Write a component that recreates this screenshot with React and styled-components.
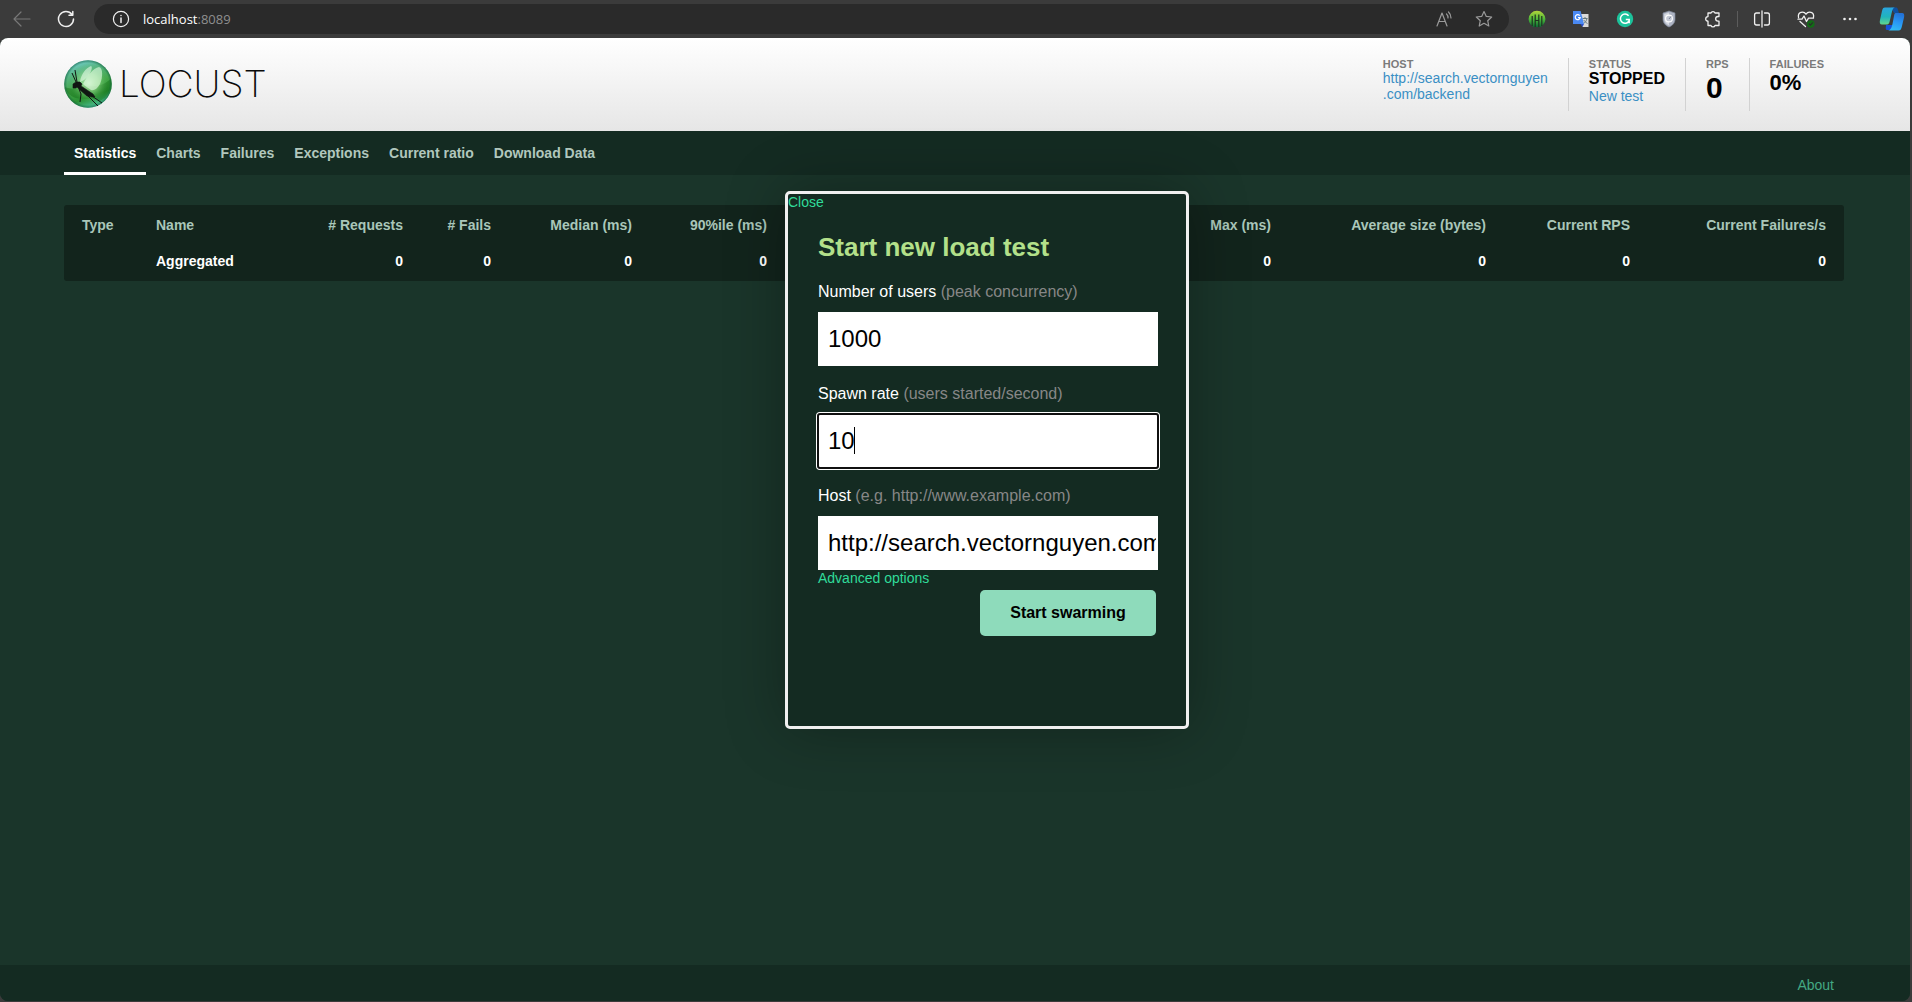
import React, { useState } from "react";
import styled, { createGlobalStyle } from "styled-components";

const GlobalStyle = createGlobalStyle`
  * {
    box-sizing: border-box;
  }

  body {
    margin: 0;
    background-color: #3b3b3b;
    color: #ffffff;
    font-family: Arial, "Liberation Sans", sans-serif;
    font-size: 14px;
    line-height: 16px;
  }

  a {
    text-decoration: none;
  }

  svg {
    display: block;
    flex: none;
  }
`;

const Window = styled.div`
  display: flex;
  flex-direction: column;
  min-height: 100vh;
  padding: 0 2px 1px 0;
`;

/* Browser toolbar */

const Toolbar = styled.div`
  display: flex;
  align-items: center;
  height: 38px;
  margin-right: -2px;
`;

const ToolButton = styled.button`
  display: flex;
  align-items: center;
  justify-content: center;
  flex: none;
  width: ${(props) => props.$width || 44}px;
  height: 30px;
  padding: 0;
  border: none;
  background: none;
  color: ${(props) => props.$color || "#f0f0f0"};
`;

const AddressBar = styled.div`
  display: flex;
  align-items: center;
  flex: 1;
  height: 30px;
  margin: 0 6px;
  padding: 0 5px 0 4px;
  border-radius: 15px;
  background-color: #2a2a2a;
`;

const Address = styled.div`
  flex: 1;
  color: #8f8f8f;
  font-family: "Open Sans", "Noto Sans", sans-serif;
  font-size: 13px;
  line-height: 18px;

  span {
    color: #ffffff;
  }
`;

const ToolDivider = styled.div`
  width: 1px;
  height: 16px;
  margin: 0 2px;
  background-color: #5c5c5c;
`;

/* Page */

const Page = styled.div`
  position: relative;
  display: flex;
  flex-direction: column;
  flex: 1;
  overflow: hidden;
  border-radius: 8px;
  background-color: #1a352a;
`;

const Header = styled.header`
  display: flex;
  justify-content: space-between;
  align-items: flex-start;
  height: 93px;
  padding: 20px 66px 0 64px;
  background: linear-gradient(#ffffff, #e6e6e6);
`;

const Logo = styled.a`
  display: flex;
  align-items: center;
  gap: 7px;
  padding-top: 2px;
  color: #0a0a0a;
  font-family: Inter, Lato, sans-serif;
  font-size: 37px;
  font-weight: 200;
  line-height: 48px;
`;

const Stats = styled.div`
  display: flex;
`;

const StatBox = styled.div`
  height: 53px;
  padding: 0 20px;
  color: #000000;

  & + & {
    border-left: 1px solid #d2d2d2;
  }

  a {
    display: block;
    color: #3a8fc4;
  }
`;

const StatLabel = styled.div`
  color: #7b7b7b;
  font-size: 11px;
  font-weight: bold;
  line-height: 12px;
`;

const StatValue = styled.div`
  font-size: ${(props) => props.$size}px;
  font-weight: bold;
  line-height: ${(props) => props.$line}px;
`;

const Nav = styled.nav`
  display: flex;
  height: 44px;
  padding: 0 64px;
  background-color: #142b22;
`;

const Tab = styled.a`
  padding: 14px 10px 11px;
  border-bottom: 3px solid ${(props) => (props.$active ? "#ffffff" : "transparent")};
  color: ${(props) => (props.$active ? "#ffffff" : "#b1c7bd")};
  font-weight: bold;
`;

const Main = styled.main`
  flex: 1;
  padding: 30px 66px 0 64px;
`;

const TablePanel = styled.div`
  padding: 2px 0;
  border-radius: 3px;
  background-color: #12241c;
`;

const StatsTable = styled.table`
  width: 100%;
  table-layout: fixed;
  border-collapse: collapse;
  font-weight: bold;
`;

const Column = styled.col`
  width: ${(props) => props.$width}px;
`;

const Cell = styled.td`
  height: 36px;
  padding: 0 18px;
  text-align: ${(props) => (props.$left ? "left" : "right")};
  white-space: nowrap;
`;

const HeadCell = styled(Cell)`
  color: #a9c6b9;
`;

const Footer = styled.footer`
  height: 36px;
  padding: 12px 76px 0;
  background-color: #142b22;
  text-align: right;

  a {
    color: #43a883;
  }
`;

/* Start dialog, shown over the page */

const Dialog = styled.section`
  position: absolute;
  top: 153px;
  left: 50%;
  width: 404px;
  min-height: 538px;
  margin-left: -170px;
  border: 3px solid #f0f0f0;
  border-radius: 5px;
  background-color: #142b22;
  box-shadow: 0 0 60px rgba(0, 0, 0, 0.3);
`;

const DialogLink = styled.a`
  display: block;
  color: #30dc9a;
`;

const Form = styled.form`
  display: flex;
  flex-direction: column;
  padding: 22px 28px 0 30px;
`;

const Title = styled.h2`
  margin: 0 0 20px;
  color: #b3e08a;
  font-size: 26px;
  line-height: 30px;
`;

const Label = styled.label`
  margin-bottom: 10px;
  font-size: 16px;
  line-height: 20px;

  span {
    color: #878787;
  }
`;

const Field = styled.div`
  position: relative;
  margin-bottom: ${(props) => (props.$last ? 0 : 18)}px;
`;

const Input = styled.input`
  display: block;
  width: 100%;
  height: 54px;
  padding: 0 2px 0 10px;
  border: none;
  background-color: #ffffff;
  color: #000000;
  caret-color: transparent;
  font-family: inherit;
  font-size: 24px;

  &:focus {
    border-radius: 2px;
    outline: 2px solid #101010;
    outline-offset: -1px;
    box-shadow: 0 0 0 2px #ffffff;
  }
`;

const Caret = styled.i`
  position: absolute;
  top: 13px;
  left: 36px;
  width: 1px;
  height: 27px;
  background-color: #000000;
`;

const SubmitButton = styled.button`
  align-self: flex-end;
  width: 176px;
  height: 46px;
  margin: 4px 2px 0 0;
  border: none;
  border-radius: 5px;
  background-color: #8edbbb;
  color: #000000;
  font-family: inherit;
  font-size: 16px;
  font-weight: bold;
`;

const columns = [
  { title: "Type", width: 74, value: "", left: true },
  { title: "Name", width: 172, value: "Aggregated", left: true },
  { title: "# Requests", width: 111, value: 0 },
  { title: "# Fails", width: 88, value: 0 },
  { title: "Median (ms)", width: 141, value: 0 },
  { title: "90%ile (ms)", width: 135, value: 0 },
  { title: "", width: 390, value: "" },
  { title: "Max (ms)", width: 114, value: 0 },
  { title: "Average size (bytes)", width: 215, value: 0 },
  { title: "Current RPS", width: 144, value: 0 },
  { title: "Current Failures/s", width: 196, value: 0 },
];

const tabs = [
  "Statistics",
  "Charts",
  "Failures",
  "Exceptions",
  "Current ratio",
  "Download Data",
];

function LineIcon({ children }) {
  return (
    <svg
      width="18"
      height="18"
      viewBox="0 0 18 18"
      fill="none"
      stroke="currentColor"
      strokeWidth="1.2"
      strokeLinecap="round"
      strokeLinejoin="round"
    >
      {children}
    </svg>
  );
}

function LocustMark() {
  return (
    <svg width="48" height="48" viewBox="0 0 48 48">
      <defs>
        <linearGradient id="orb" x1="0.25" y1="0" x2="0.6" y2="1">
          <stop offset="0" stopColor="#74cfd0" />
          <stop offset="0.25" stopColor="#57b585" />
          <stop offset="0.55" stopColor="#43a648" />
          <stop offset="0.78" stopColor="#2b9134" />
          <stop offset="1" stopColor="#4cc09a" />
        </linearGradient>
        <radialGradient id="glow" cx="0.52" cy="0.48" r="0.42">
          <stop offset="0" stopColor="#e6ffe2" stopOpacity="0.7" />
          <stop offset="0.5" stopColor="#a8e89c" stopOpacity="0.5" />
          <stop offset="1" stopColor="#4cb050" stopOpacity="0" />
        </radialGradient>
        <radialGradient id="rim" cx="0.5" cy="0.5" r="0.5">
          <stop offset="0.88" stopColor="#0b5a3c" stopOpacity="0" />
          <stop offset="1" stopColor="#0b5a3c" stopOpacity="0.6" />
        </radialGradient>
      </defs>
      <circle cx="24" cy="24" r="23.8" fill="url(#orb)" />
      <path
        d="M1 27C9 31 14 25 25 26S40 24 47 19C48 29 43 38 36 41C28 37 20 40 12 38C6 36 2 32 1 27Z"
        fill="#0f6a12"
        opacity="0.4"
      />
      <circle cx="24" cy="24" r="23" fill="url(#glow)" />
      <circle cx="24" cy="24" r="23.8" fill="url(#rim)" />
      <path
        d="M16 22C17 14 22 8 27 6C29 7 27 13 24 16C22 19 19 21 16 22Z"
        fill="#effff0"
        opacity="0.55"
      />
      <path
        d="M19 24C23 16 29 8 35 7C39 8 39 17 36 24C33 29 30 31 27 30C24 28 21 26 19 24Z"
        fill="#e8ffe6"
        opacity="0.6"
      />
      <path
        d="M9 28L9 24L12 22L16 22L18 24L17 26L23 30L29 34L31 37L28 37L23 36L16 30L13 27L12 28Z"
        fill="#101612"
        stroke="#101612"
        strokeWidth="0.6"
        strokeLinejoin="round"
      />
      <path
        d="M12 22L8 13M13 22L11 10M15 29L17 34L16 42M23 35L34 46M28 36L38 43"
        fill="none"
        stroke="#101612"
        strokeWidth="1"
      />
    </svg>
  );
}

function EqualizerIcon() {
  return (
    <svg width="18" height="18" viewBox="0 0 18 18">
      <defs>
        <linearGradient id="lime" x1="0" y1="0" x2="0" y2="1">
          <stop offset="0" stopColor="#b5d63a" />
          <stop offset="0.5" stopColor="#4fb83a" />
          <stop offset="1" stopColor="#0c6b35" />
        </linearGradient>
      </defs>
      <path d="M3 15A8.4 8.4 0 1 1 15 15L12.5 17H5.5Z" fill="url(#lime)" />
      <path d="M4.2 6V16M7.2 4.5V17M10.8 4.5V17M13.8 6V16M7 10.5H11" stroke="#1f3320" strokeWidth="1.2" />
    </svg>
  );
}

function TranslateIcon() {
  return (
    <svg width="18" height="18" viewBox="0 0 18 18">
      <path d="M8 4H16.5V17H10.5Z" fill="#d9d9d9" />
      <path d="M10.5 8.5H15.5M13 7V8.5M15 8.5C14.4 11 13 12.8 11.4 13.6M11.6 10L15.4 13.8" fill="none" stroke="#66797d" strokeWidth="1" />
      <path d="M1 1H8.6L12 14H1Z" fill="#4a89f3" />
      <path d="M8.5 14H12L10.4 17Z" fill="#2b50c8" />
      <path d="M7.7 5.6A2.5 2.5 0 1 0 8.2 7.7H6" fill="none" stroke="#ffffff" strokeWidth="1.2" />
    </svg>
  );
}

function GrammarIcon() {
  return (
    <svg width="18" height="18" viewBox="0 0 18 18">
      <circle cx="9" cy="9" r="8.2" fill="#1cc29b" />
      <path d="M12.6 5.8A4.6 4.6 0 1 0 13 11M13.2 13.2V9.6H9.8" fill="none" stroke="#ffffff" strokeWidth="1.5" />
    </svg>
  );
}

function ShieldIcon() {
  return (
    <svg width="18" height="18" viewBox="0 0 18 18">
      <path d="M9 1L15 3V9C15 13 12.4 15.6 9 17C5.6 15.6 3 13 3 9V3Z" fill="#aeb4c3" stroke="#7d8596" strokeWidth="0.7" />
      <path d="M9 2.5L4.3 4V9C4.3 11.8 6.2 14 9 15.3Z" fill="#d5d9e2" />
      <circle cx="9" cy="8.5" r="3.4" fill="#c4c9d5" stroke="#ffffff" strokeWidth="1.1" />
      <path d="M9 9L11 6.5" stroke="#778094" strokeWidth="1" />
    </svg>
  );
}

function CopilotIcon() {
  return (
    <svg width="26" height="26" viewBox="0 0 26 26">
      <defs>
        <linearGradient id="copilotLeft" x1="0" y1="0" x2="0" y2="1">
          <stop offset="0" stopColor="#2aa5e0" />
          <stop offset="0.55" stopColor="#20b4bd" />
          <stop offset="1" stopColor="#62d58d" />
        </linearGradient>
        <linearGradient id="copilotRight" x1="0.6" y1="0" x2="0.3" y2="1">
          <stop offset="0" stopColor="#2372d6" />
          <stop offset="0.5" stopColor="#2997f5" />
          <stop offset="1" stopColor="#31bdf4" />
        </linearGradient>
      </defs>
      <path d="M12 1.5H17C19 1.5 19 4 20 7H15Z" fill="#0f4f9e" />
      <path d="M8 24H12L14 19H7C7 21 6 24 8 24Z" fill="#1650d8" />
      <path d="M6 1.5H16C13.5 2 13.2 5 12.2 9L10.5 16C10 18 9 18.5 7 18.5H3C0.8 18.5 0.4 16.5 1 14L3 5C3.6 2.5 4.2 1.5 6 1.5Z" fill="url(#copilotLeft)" />
      <path d="M16.5 7H23C25.2 7 25.6 9 25 11.5L23 20C22.3 23 21.6 24.5 19.5 24.5H9C12 24 12.6 21.5 13.6 17.5L15 10C15.3 8 15.7 7 16.5 7Z" fill="url(#copilotRight)" />
    </svg>
  );
}

function BrowserToolbar() {
  return (
    <Toolbar>
      <ToolButton aria-label="Back" $color="#787878">
        <LineIcon>
          <path d="M17 9H1M8 2L1 9L8 16" />
        </LineIcon>
      </ToolButton>
      <ToolButton aria-label="Refresh">
        <LineIcon>
          <path d="M15 4.5A7.5 7.5 0 1 0 16.5 9M15.8 1.5V5.2H12" strokeWidth="1.5" />
        </LineIcon>
      </ToolButton>
      <AddressBar>
        <ToolButton aria-label="Site information" $width={45}>
          <LineIcon>
            <circle cx="9" cy="9" r="7.6" />
            <path d="M9 8V12.5M9 5.4V5.6" strokeWidth="1.5" />
          </LineIcon>
        </ToolButton>
        <Address>
          <span>localhost</span>:8089
        </Address>
        <ToolButton aria-label="Read aloud" $width={40} $color="#9a9a9a">
          <LineIcon>
            <path d="M2 16L7 3L12 16M4 11.5H10M11.5 4A5 5 0 0 1 13 8M13.5 2A8 8 0 0 1 16 8" />
          </LineIcon>
        </ToolButton>
        <ToolButton aria-label="Add to favorites" $width={40} $color="#9a9a9a">
          <LineIcon>
            <path d="M9 1.5L11.3 6.4L16.7 7L12.7 10.7L13.8 16L9 13.3L4.2 16L5.3 10.7L1.3 7L6.7 6.4Z" />
          </LineIcon>
        </ToolButton>
      </AddressBar>
      <ToolButton aria-label="Equalizer extension">
        <EqualizerIcon />
      </ToolButton>
      <ToolButton aria-label="Translate extension">
        <TranslateIcon />
      </ToolButton>
      <ToolButton aria-label="Grammar extension">
        <GrammarIcon />
      </ToolButton>
      <ToolButton aria-label="Shield extension">
        <ShieldIcon />
      </ToolButton>
      <ToolButton aria-label="Extensions">
        <LineIcon>
          <path
            d="M4 3H7A2.1 2.1 0 0 1 11 3H15V6.5H14A2.3 2.3 0 0 0 14 11.2H15V15.5H11A2.1 2.1 0 0 1 7 15.5H4V11.2A2.3 2.3 0 0 1 4 6.6Z"
            strokeWidth="1.3"
          />
        </LineIcon>
      </ToolButton>
      <ToolDivider />
      <ToolButton aria-label="Split screen">
        <LineIcon>
          <path
            d="M6.5 3H3.5Q1.6 3 1.6 5V13Q1.6 15 3.5 15H6.5M11.5 3H14.5Q16.4 3 16.4 5V13Q16.4 15 14.5 15H11.5M9 1V17"
            strokeWidth="1.3"
          />
        </LineIcon>
      </ToolButton>
      <ToolButton aria-label="Browser essentials">
        <LineIcon>
          <path
            d="M1.5 7.5C0.5 2 6.5 0.5 9 4.2C11.5 0.5 17.5 2 16.5 7.5M1 9.2H5L7 6L9.5 11.5L11.5 8.2H16.5M3 11.5L8.5 16.5"
            strokeWidth="1.3"
          />
          <circle cx="13.8" cy="14" r="3.8" fill="#126b16" stroke="none" />
          <path d="M12.2 14L13.4 15.2L15.5 12.8" stroke="#2b2b2b" />
        </LineIcon>
      </ToolButton>
      <ToolButton aria-label="Settings and more">
        <LineIcon>
          <g fill="currentColor" stroke="none">
            <circle cx="3.5" cy="9" r="1.3" />
            <circle cx="9" cy="9" r="1.3" />
            <circle cx="14.5" cy="9" r="1.3" />
          </g>
        </LineIcon>
      </ToolButton>
      <ToolButton aria-label="Copilot" $width={40}>
        <CopilotIcon />
      </ToolButton>
    </Toolbar>
  );
}

function App() {
  const [users, setUsers] = useState("1000");
  const [rate, setRate] = useState("10");
  const [host, setHost] = useState("http://search.vectornguyen.com/backend");

  return (
    <Window>
      <GlobalStyle />
      <BrowserToolbar />
      <Page>
        <Header>
          <Logo href="#">
            <LocustMark />
            LOCUST
          </Logo>
          <Stats>
            <StatBox>
              <StatLabel>HOST</StatLabel>
              <a href="#host">
                http://search.vectornguyen
                <br />
                .com/backend
              </a>
            </StatBox>
            <StatBox>
              <StatLabel>STATUS</StatLabel>
              <StatValue $size={16} $line={18}>
                STOPPED
              </StatValue>
              <a href="#new">New test</a>
            </StatBox>
            <StatBox>
              <StatLabel>RPS</StatLabel>
              <StatValue $size={30} $line={36}>
                0
              </StatValue>
            </StatBox>
            <StatBox>
              <StatLabel>FAILURES</StatLabel>
              <StatValue $size={22} $line={26}>
                0%
              </StatValue>
            </StatBox>
          </Stats>
        </Header>
        <Nav>
          {tabs.map((tab, index) => (
            <Tab key={tab} href="#" $active={index === 0}>
              {tab}
            </Tab>
          ))}
        </Nav>
        <Main>
          <TablePanel>
            <StatsTable>
              <colgroup>
                {columns.map((column) => (
                  <Column key={column.title} $width={column.width} />
                ))}
              </colgroup>
              <thead>
                <tr>
                  {columns.map((column) => (
                    <HeadCell as="th" key={column.title} $left={column.left}>
                      {column.title}
                    </HeadCell>
                  ))}
                </tr>
              </thead>
              <tbody>
                <tr>
                  {columns.map((column) => (
                    <Cell key={column.title} $left={column.left}>
                      {column.value}
                    </Cell>
                  ))}
                </tr>
              </tbody>
            </StatsTable>
          </TablePanel>
        </Main>
        <Footer>
          <a href="#about">About</a>
        </Footer>
        <Dialog role="dialog" aria-labelledby="dialog-title">
          <DialogLink href="#close">Close</DialogLink>
          <Form onSubmit={(e) => e.preventDefault()}>
            <Title id="dialog-title">Start new load test</Title>
            <Label htmlFor="users">
              Number of users <span>(peak concurrency)</span>
            </Label>
            <Field>
              <Input id="users" value={users} onChange={(e) => setUsers(e.target.value)} />
            </Field>
            <Label htmlFor="rate">
              Spawn rate <span>(users started/second)</span>
            </Label>
            <Field>
              <Input id="rate" value={rate} onChange={(e) => setRate(e.target.value)} autoFocus />
              <Caret />
            </Field>
            <Label htmlFor="host">
              Host <span>(e.g. http://www.example.com)</span>
            </Label>
            <Field $last>
              <Input id="host" value={host} onChange={(e) => setHost(e.target.value)} />
            </Field>
            <DialogLink href="#advanced">Advanced options</DialogLink>
            <SubmitButton type="submit">Start swarming</SubmitButton>
          </Form>
        </Dialog>
      </Page>
    </Window>
  );
}

export default App;
